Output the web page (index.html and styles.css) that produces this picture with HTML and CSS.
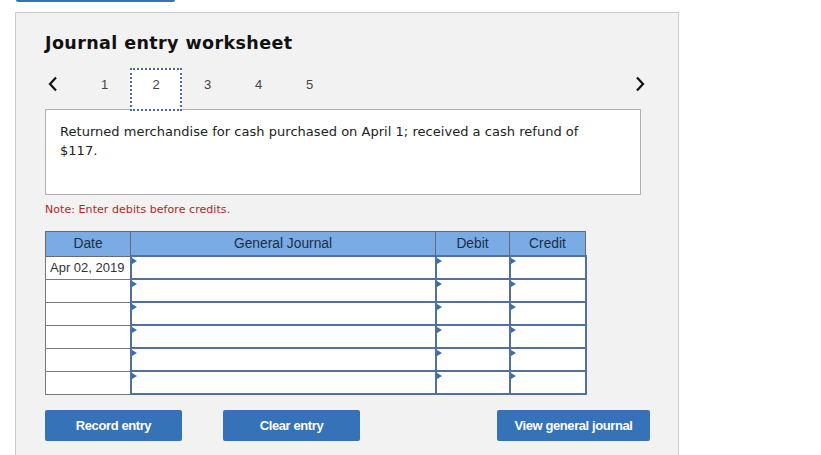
FILE: index.html
```html
<!DOCTYPE html>
<html>
<head>
<meta charset="utf-8">
<link rel="stylesheet" href="styles.css">
</head>
<body>
<div class="topbar"></div>
<div class="panel">
  <h1 class="title">Journal entry worksheet</h1>
  <div class="nav">
    <div class="chev chev-left"><svg width="10" height="16" viewBox="0 0 10 16"><polyline points="8,1.5 2,8 8,14.5" fill="none" stroke="#111" stroke-width="2.2"/></svg></div>
    <div class="tab">1</div>
    <div class="tab active">2</div>
    <div class="tab">3</div>
    <div class="tab">4</div>
    <div class="tab">5</div>
    <div class="chev chev-right"><svg width="10" height="16" viewBox="0 0 10 16"><polyline points="2,1.5 8,8 2,14.5" fill="none" stroke="#111" stroke-width="2.2"/></svg></div>
  </div>
  <div class="question">Returned merchandise for cash purchased on April 1; received a cash refund of $117.</div>
  <div class="note">Note: Enter debits before credits.</div>
  <table class="journal">
    <colgroup><col class="c-date"><col class="c-gj"><col class="c-dr"><col class="c-cr"></colgroup>
    <thead>
      <tr><th>Date</th><th>General Journal</th><th>Debit</th><th>Credit</th></tr>
    </thead>
    <tbody>
      <tr><td class="date">Apr 02, 2019</td><td class="inp"><span class="tri"></span></td><td class="inp"><span class="tri"></span></td><td class="inp"><span class="tri"></span></td></tr>
      <tr><td class="date"></td><td class="inp"><span class="tri"></span></td><td class="inp"><span class="tri"></span></td><td class="inp"><span class="tri"></span></td></tr>
      <tr><td class="date"></td><td class="inp"><span class="tri"></span></td><td class="inp"><span class="tri"></span></td><td class="inp"><span class="tri"></span></td></tr>
      <tr><td class="date"></td><td class="inp"><span class="tri"></span></td><td class="inp"><span class="tri"></span></td><td class="inp"><span class="tri"></span></td></tr>
      <tr><td class="date"></td><td class="inp"><span class="tri"></span></td><td class="inp"><span class="tri"></span></td><td class="inp"><span class="tri"></span></td></tr>
      <tr><td class="date"></td><td class="inp"><span class="tri"></span></td><td class="inp"><span class="tri"></span></td><td class="inp"><span class="tri"></span></td></tr>
    </tbody>
  </table>
  <div class="buttons">
    <button class="btn btn-record">Record entry</button>
    <button class="btn btn-clear">Clear entry</button>
    <button class="btn btn-view">View general journal</button>
  </div>
</div>
</body>
</html>
```

FILE: styles.css
```css
html, body {
  margin: 0;
  padding: 0;
  background: #ffffff;
  overflow: hidden;
}
body {
  font-family: "DejaVu Sans", Verdana, sans-serif;
  color: #111;
}
.topbar {
  margin-left: 16px;
  width: 159px;
  height: 2px;
  background: #3572b8;
  border-radius: 0 0 3px 3px;
}
.panel {
  margin-top: 10px;
  margin-left: 15px;
  width: 662px;
  height: 460px;
  background: #f2f2f2;
  border: 1px solid #cccccc;
  box-sizing: content-box;
  padding: 0;
}
.title {
  margin: 19px 0 0 29px;
  font-size: 17.5px;
  line-height: 22px;
  font-weight: bold;
  letter-spacing: 0.4px;
  color: #111;
}
.nav {
  margin: 14px 0 0 29px;
  height: 41px;
  display: flex;
  align-items: flex-start;
  font-family: "Liberation Sans", Arial, sans-serif;
  font-size: 13px;
  color: #444;
}
.chev {
  height: 32px;
  display: flex;
  align-items: center;
}
.chev-left {
  width: 34px;
  padding-left: 3px;
  box-sizing: border-box;
}
.chev-right {
  margin-left: 300px;
}
.tab {
  width: 51px;
  height: 32px;
  display: flex;
  align-items: center;
  justify-content: center;
  box-sizing: border-box;
}
.tab.active {
  width: 52px;
  height: 43px;
  background: #ffffff;
  border: 2px dotted #4a6a9e;
  padding-bottom: 11px;
  position: relative;
  z-index: 1;
}
.question {
  margin-left: 29px;
  width: 596px;
  height: 86px;
  box-sizing: border-box;
  background: #ffffff;
  border: 1px solid #b0b0b0;
  padding: 12px 50px 0 14px;
  font-size: 13px;
  line-height: 19px;
  letter-spacing: 0.03px;
  color: #222;
}
.note {
  margin: 8px 0 0 29px;
  font-size: 11px;
  line-height: 14px;
  letter-spacing: 0.06px;
  color: #b3261e;
}
.journal {
  margin: 14px 0 0 29px;
  border-collapse: collapse;
  table-layout: fixed;
  width: 540px;
  font-family: "Liberation Sans", Arial, sans-serif;
  font-size: 13px;
}
.c-date { width: 85px; }
.c-gj { width: 305px; }
.c-dr { width: 74px; }
.c-cr { width: 76px; }
.journal th {
  height: 23px;
  padding: 0;
  background: #7aabe4;
  border: 1px solid #6a6a6a;
  font-weight: normal;
  font-size: 13.8px;
  color: #1c2f45;
  text-align: center;
}
.journal td {
  height: 21px;
  padding: 0;
  background: #ffffff;
}
.journal td.date {
  border: 1px solid #7a7a7a;
  padding-left: 4px;
  color: #333;
  white-space: nowrap;
  vertical-align: middle;
}
.journal td.inp {
  border: 2px solid #52709c;
  vertical-align: top;
}
.tri {
  display: block;
  width: 0;
  height: 0;
  margin-top: 1px;
  border-top: 3px solid transparent;
  border-bottom: 3px solid transparent;
  border-left: 5px solid #3d6cae;
}
.buttons {
  margin: 15px 0 0 29px;
  display: flex;
}
.btn {
  height: 31px;
  border: none;
  border-radius: 2px;
  background: #3572b8;
  color: #ffffff;
  font-family: "Liberation Sans", Arial, sans-serif;
  font-size: 13px;
  font-weight: bold;
  letter-spacing: -0.4px;
  padding: 0;
  cursor: pointer;
}
.btn-record { width: 137px; }
.btn-clear { width: 137px; margin-left: 41px; }
.btn-view { width: 153px; margin-left: 137px; }
```
